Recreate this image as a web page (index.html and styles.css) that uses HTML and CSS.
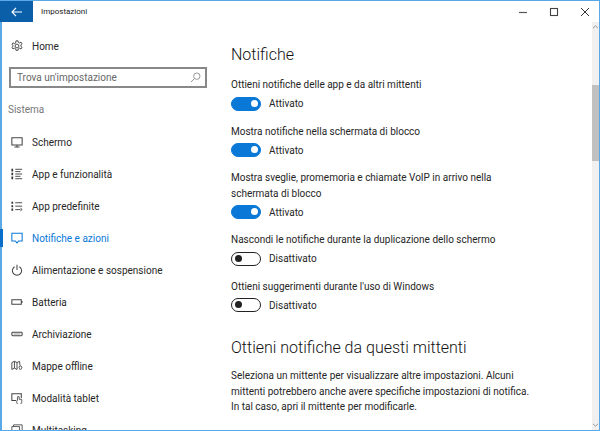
FILE: index.html
```html
<!DOCTYPE html>
<html lang="it">
<head>
<meta charset="utf-8">
<title>Impostazioni</title>
<link rel="stylesheet" href="styles.css">
</head>
<body>
<div class="window">
  <header class="titlebar">
    <div class="back"><svg width="12" height="10" viewBox="0 0 12 10"><path d="M5 .8 1 5l4 4.2M1 5h10" fill="none" stroke="#fff" stroke-width="1.1"/></svg></div>
    <div class="title">Impostazioni</div>
    <div class="controls">
      <svg width="10" height="10" viewBox="0 0 10 10"><path d="M1 5.5h8" stroke="#555" stroke-width="1.2"/></svg>
      <svg width="10" height="10" viewBox="0 0 10 10"><rect x="1.5" y="1.5" width="7" height="7" fill="none" stroke="#444" stroke-width="1.1"/></svg>
      <svg width="10" height="10" viewBox="0 0 10 10"><path d="M1 1l8 8M9 1 1 9" stroke="#333" stroke-width="1"/></svg>
    </div>
  </header>
  <div class="main">
    <nav class="sidebar">
      <div class="home">
        <svg class="icon" width="12" height="12" viewBox="0 0 14 14"><g fill="none" stroke="#444" stroke-width="1.1"><circle cx="7" cy="7" r="2.2"/><path d="M5.8 1h2.4l.4 1.8 1.5.7 1.6-1 1.2 2-1.4 1.2v1.6l1.4 1.2-1.2 2-1.6-1-1.5.7-.4 1.8H5.8l-.4-1.8-1.5-.7-1.6 1-1.2-2 1.4-1.2V6.5L1.1 5.3l1.2-2 1.6 1 1.5-.7z"/></g></svg>
        <span>Home</span>
      </div>
      <div class="search"><span>Trova un'impostazione</span>
        <svg width="11" height="11" viewBox="0 0 11 11"><g fill="none" stroke="#999"><circle cx="6.8" cy="4.2" r="3.2"/><path d="M4.5 6.5 1 10"/></g></svg>
      </div>
      <div class="section">Sistema</div>
      <ul class="menu">
        <li><svg class="icon" width="12" height="12" viewBox="0 0 14 14"><path d="M1 2h12v8.5H1zM7 10.5v2M4 12.8h6" fill="none" stroke="#444" stroke-width="1.2"/></svg><span>Schermo</span></li>
        <li><svg class="icon" width="12" height="12" viewBox="0 0 14 14"><path d="M1.5 1v3M1.5 5.5v3M1.5 10v3" stroke="#333" stroke-width="2"/><path d="M5 1.5h8M5 4.2h6M5 7h8M5 9.7h6M5 12.5h8" stroke="#444" fill="none" stroke-width="1.1"/></svg><span>App e funzionalità</span></li>
        <li><svg class="icon" width="12" height="12" viewBox="0 0 14 14"><path d="M1.5 2v2.4M1.5 6v2.4M1.5 10v2.4" stroke="#333" stroke-width="2"/><path d="M5 3.2h8M5 7.2h8M5 11.2h6M11 9.5l2 1.6-2 1.6" stroke="#444" fill="none" stroke-width="1.1"/></svg><span>App predefinite</span></li>
        <li class="active"><svg class="icon" width="12" height="12" viewBox="0 0 14 14"><path d="M1 1.5h12v9H9l-2 2.2L5 10.5H1z" fill="none" stroke="#0a78d7" stroke-width="1.2"/></svg><span>Notifiche e azioni</span></li>
        <li><svg class="icon" width="12" height="12" viewBox="0 0 14 14"><path d="M7 1v6M4.2 3.2a5.4 5.4 0 1 0 5.6 0" fill="none" stroke="#444" stroke-width="1.2"/></svg><span>Alimentazione e sospensione</span></li>
        <li><svg class="icon" width="12" height="12" viewBox="0 0 14 14"><path d="M1 4.5h11v5H1zM13 6v2" fill="none" stroke="#444" stroke-width="1.2"/></svg><span>Batteria</span></li>
        <li><svg class="icon" width="12" height="12" viewBox="0 0 14 14"><rect x="1" y="5" width="12" height="4" rx="1" fill="none" stroke="#444" stroke-width="1.2"/><path d="M3 7h8" stroke="#888"/></svg><span>Archiviazione</span></li>
        <li><svg class="icon" width="12" height="12" viewBox="0 0 14 14"><path d="M1 3l3-1.5 3 1.5 3-1.5 .5 5M1 3v8l3-1.5 3 1.5M4 1.5v8M7 3v8M11 7a1.6 1.6 0 0 0-1.6 1.6c0 1.2 1.6 3 1.6 3s1.6-1.8 1.6-3A1.6 1.6 0 0 0 11 7z" fill="none" stroke="#444" stroke-width="1.1"/></svg><span>Mappe offline</span></li>
        <li><svg class="icon" width="12" height="12" viewBox="0 0 14 14"><path d="M6 10H1V2h11v5" fill="none" stroke="#444" stroke-width="1.2"/><path d="M7.5 6.5v3a3 3 0 1 0 5 1.5V8.5h-3V5.5h-2z" fill="#fff" stroke="#444"/></svg><span>Modalità tablet</span></li>
        <li><svg class="icon" width="12" height="12" viewBox="0 0 14 14"><path d="M1 3h9v8H1zM3 3V1h10v8h-3" fill="none" stroke="#444"/></svg><span>Multitasking</span></li>
      </ul>
    </nav>
    <main class="content">
      <h1>Notifiche</h1>
      <div class="setting"><p>Ottieni notifiche delle app e da altri mittenti</p><div class="toggle-row"><span class="toggle on"></span><span>Attivato</span></div></div>
      <div class="setting"><p>Mostra notifiche nella schermata di blocco</p><div class="toggle-row"><span class="toggle on"></span><span>Attivato</span></div></div>
      <div class="setting"><p>Mostra sveglie, promemoria e chiamate VoIP in arrivo nella<br>schermata di blocco</p><div class="toggle-row"><span class="toggle on"></span><span>Attivato</span></div></div>
      <div class="setting"><p>Nascondi le notifiche durante la duplicazione dello schermo</p><div class="toggle-row"><span class="toggle"></span><span>Disattivato</span></div></div>
      <div class="setting"><p>Ottieni suggerimenti durante l'uso di Windows</p><div class="toggle-row"><span class="toggle"></span><span>Disattivato</span></div></div>
      <h2>Ottieni notifiche da questi mittenti</h2>
      <p class="desc">Seleziona un mittente per visualizzare altre impostazioni. Alcuni<br>mittenti potrebbero anche avere specifiche impostazioni di notifica.<br>In tal caso, apri il mittente per modificarle.</p>
    </main>
    <div class="scrollbar">
      <svg width="7" height="6" viewBox="0 0 7 6"><path d="M1 4.2 3.5 1.8 6 4.2" fill="none" stroke="#999"/></svg>
      <div class="thumb"></div>
      <svg class="down" width="7" height="6" viewBox="0 0 7 6"><path d="M1 1.8 3.5 4.2 6 1.8" fill="none" stroke="#999"/></svg>
    </div>
  </div>
</div>
</body>
</html>
```
FILE: styles.css
```css
* { box-sizing: border-box; margin: 0; padding: 0; }
html, body { width: 600px; height: 431px; overflow: hidden; background: #fff; }
body { font-family: Roboto, "Open Sans", sans-serif; font-size: 10px; color: #262626; }
.window { width: 600px; height: 431px; padding: 1px 1px 1px 0; box-shadow: inset 2px 0 0 #5aa9e6, inset -1px 0 0 #5aa9e6, inset 0 1px 0 #5aa9e6, inset 0 -1px 0 #5aa9e6; display: flex; flex-direction: column; }
.titlebar { height: 21px; display: flex; align-items: center; flex: none; }
.back { width: 33px; height: 21px; background: #0b5fa8; display: flex; align-items: center; justify-content: center; }
.title { margin-left: 8px; font-size: 8px; color: #222; flex: 1; }
.controls { display: flex; gap: 21px; padding-right: 9px; align-items: center; }
.main { flex: 1; display: flex; min-height: 0; overflow: hidden; }
.sidebar { width: 231px; flex: none; }
.home { display: flex; align-items: center; height: 24px; margin-top: 12px; padding-left: 11px; gap: 9px; }
.search { margin: 9px 0 0 9px; width: 198px; height: 21px; border: 2px solid #888; display: flex; align-items: center; justify-content: space-between; padding: 0 4px 0 6px; color: #666; }
.section { margin: 14px 0 0 8px; color: #777; height: 16px; line-height: 16px; }
.menu { list-style: none; margin-top: 8px; }
.menu li { height: 32px; display: flex; align-items: center; gap: 9px; padding-left: 11px; position: relative; }
.menu li.active { color: #0a78d7; }
.menu li.active::before { content: ""; position: absolute; left: 0; top: 7px; width: 3px; height: 18px; background: #0a6fc8; }
.icon { flex: none; }
.content { flex: 1; padding: 21px 0 0 0; min-width: 0; }
h1 { font-weight: 300; font-size: 16px; line-height: 24px; color: #111; margin-bottom: 10px; }
.setting { margin-bottom: 10px; }
.setting p, .desc { line-height: 15.5px; }
.toggle-row { display: flex; align-items: center; gap: 8px; height: 20px; margin-top: 1px; }
.toggle { width: 30px; height: 14px; border-radius: 7px; border: 1.5px solid #222; position: relative; flex: none; }
.toggle::after { content: ""; position: absolute; left: 2.5px; top: 2px; width: 7px; height: 7px; border-radius: 50%; background: #222; }
.toggle.on { background: #0a78d7; border-color: #0a78d7; }
.toggle.on::after { left: auto; right: 2.5px; background: #fff; }
h2 { font-weight: 300; font-size: 16px; line-height: 24px; color: #111; margin: 21px 0 8px; }
.scrollbar { width: 7px; flex: none; background: #f0f0f0; display: flex; flex-direction: column; align-items: center; padding: 2px 0; }
.scrollbar svg { flex: none; }
.thumb { width: 7px; height: 76px; background: #c0c0c0; margin-top: 55px; }
.down { margin-top: auto; }
```
